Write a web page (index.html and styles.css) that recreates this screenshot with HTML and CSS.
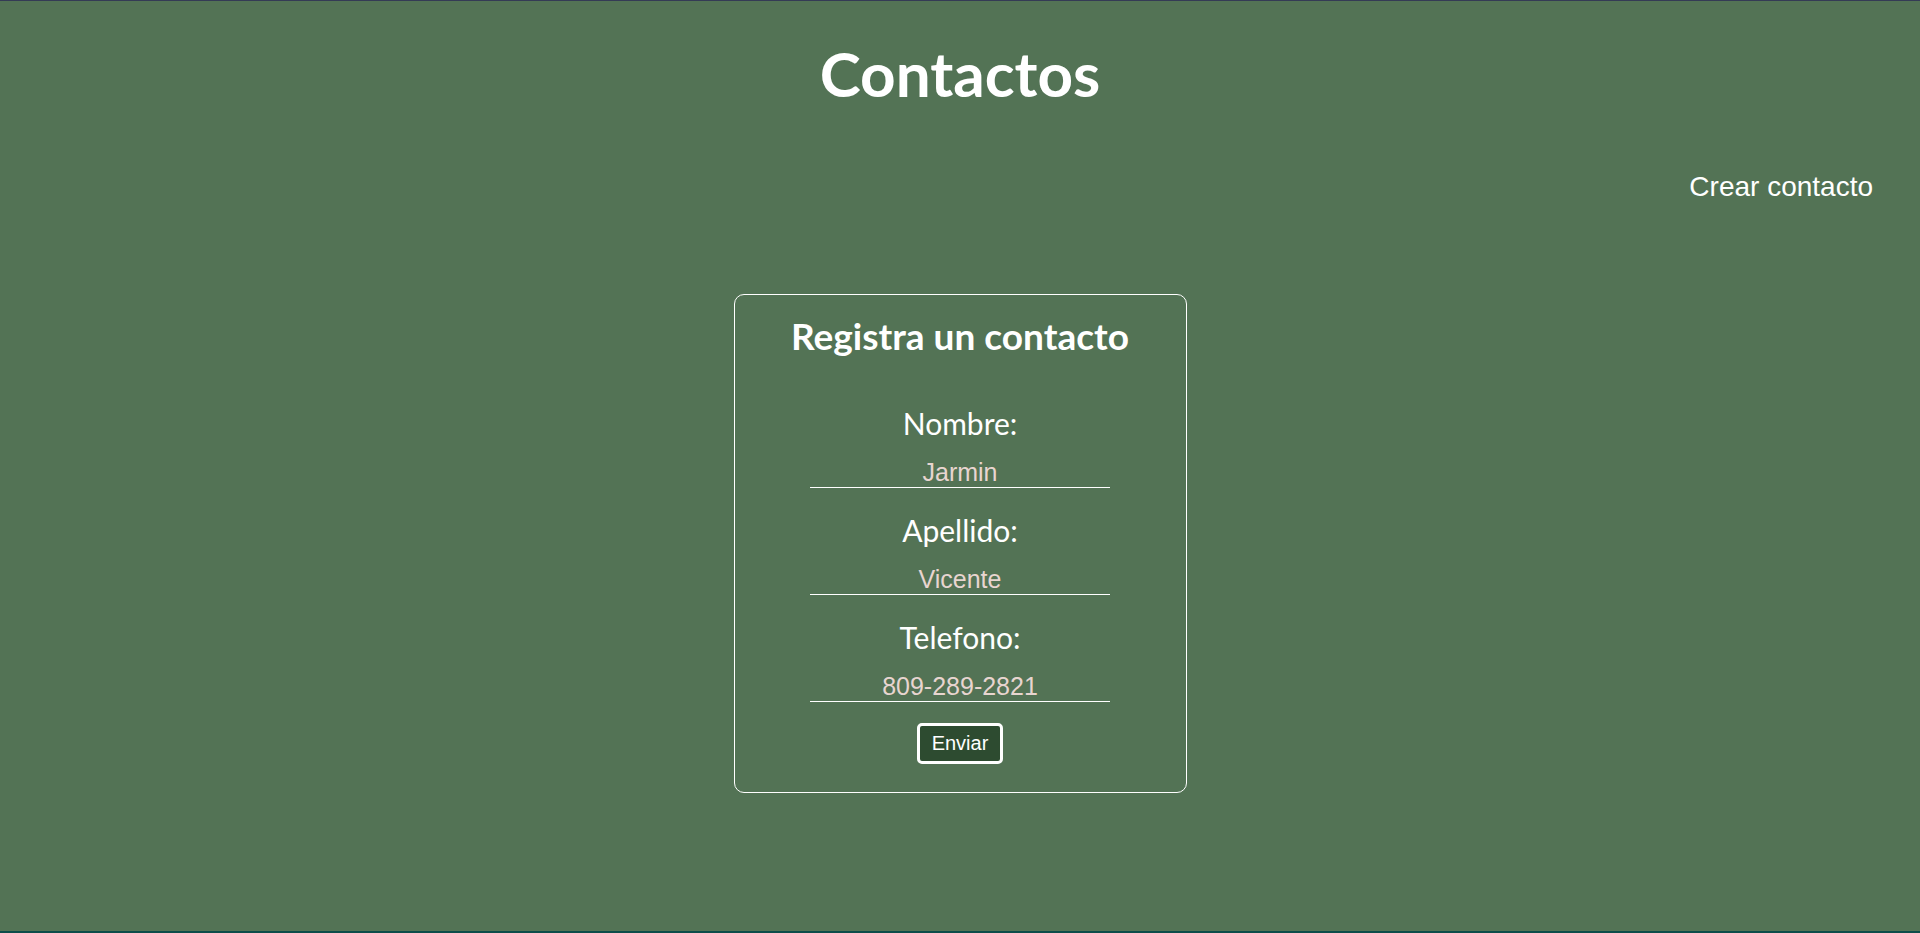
FILE: index.html
```html
<!DOCTYPE html>
<html lang="es">
<head>
<meta charset="utf-8">
<title>Contactos</title>
<link rel="stylesheet" href="styles.css">
</head>
<body>
<header class="top">
  <h1 class="title">Contactos</h1>
</header>
<nav class="nav">
  <a class="nav-link" href="#">Crear contacto</a>
</nav>
<main class="main">
  <section class="card">
    <h2 class="card-title">Registra un contacto</h2>
    <form class="form">
      <div class="field">
        <label class="label" for="nombre">Nombre:</label>
        <input class="input" id="nombre" type="text" value="Jarmin">
      </div>
      <div class="field">
        <label class="label" for="apellido">Apellido:</label>
        <input class="input" id="apellido" type="text" value="Vicente">
      </div>
      <div class="field">
        <label class="label" for="telefono">Telefono:</label>
        <input class="input" id="telefono" type="text" value="809-289-2821">
      </div>
      <button class="btn" type="button">Enviar</button>
    </form>
  </section>
</main>
</body>
</html>
```
FILE: styles.css
```css
* { box-sizing: border-box; }
html, body { margin: 0; padding: 0; }
body {
  min-height: 100vh;
  background: #537355;
  border-top: 1px solid #343b55;
  border-bottom: 2px solid #0c4d4a;
  color: #fff;
  font-family: "Lato", "Open Sans", sans-serif;
  display: flex;
  flex-direction: column;
}
.top { display: flex; justify-content: center; padding-top: 35px; }
.title {
  margin: 0;
  font-size: 62px;
  font-weight: 700;
  line-height: 1.2;
}
.nav {
  display: flex;
  justify-content: flex-end;
  padding-right: 47px;
  margin-top: 60px;
}
.nav-link {
  color: #fff;
  text-decoration: none;
  font-family: "Liberation Sans", Arial, sans-serif;
  font-size: 28px;
  line-height: 1.2;
}
.main {
  display: flex;
  justify-content: center;
  margin-top: 90px;
}
.card {
  width: 453px;
  border: 1px solid #fff;
  border-radius: 10px;
  padding: 19px 0 28px;
  display: flex;
  flex-direction: column;
  align-items: center;
}
.card-title {
  margin: 0;
  font-size: 37px;
  font-weight: 700;
  line-height: 1.2;
}
.form {
  margin-top: 47px;
  display: flex;
  flex-direction: column;
  align-items: center;
  gap: 24px;
}
.field {
  display: flex;
  flex-direction: column;
  align-items: center;
  gap: 16px;
}
.label {
  font-size: 30px;
  font-weight: 400;
  line-height: 1.2;
}
.input {
  width: 300px;
  height: 31px;
  padding: 0;
  margin: 0;
  background: transparent;
  border: none;
  border-bottom: 1px solid #fff;
  outline: none;
  color: #e8d5d0;
  text-align: center;
  font-family: "Liberation Sans", Arial, sans-serif;
  font-size: 25px;
  line-height: 30px;
}
.btn {
  margin-top: -3px;
  width: 86px;
  height: 41px;
  background: #2d4b30;
  border: 3px solid #fff;
  border-radius: 5px;
  color: #fff;
  font-family: "Liberation Sans", Arial, sans-serif;
  font-size: 20px;
  padding: 0;
}
```
